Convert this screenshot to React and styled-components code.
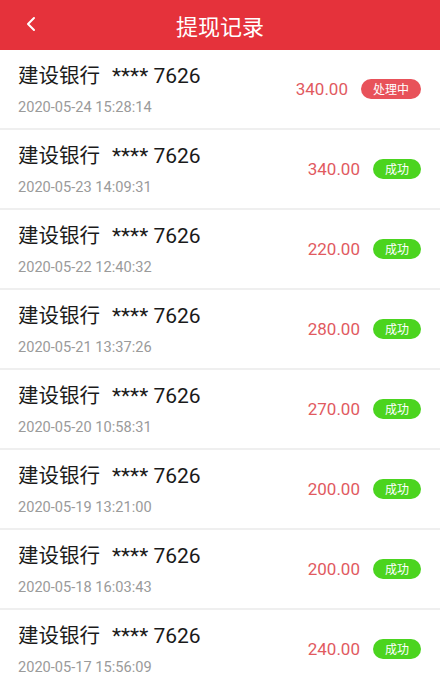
import React from "react"
import styled, { createGlobalStyle } from "styled-components"

const records = [
  { date: "2020-05-24 15:28:14", amount: "340.00", status: "pending" },
  { date: "2020-05-23 14:09:31", amount: "340.00", status: "done" },
  { date: "2020-05-22 12:40:32", amount: "220.00", status: "done" },
  { date: "2020-05-21 13:37:26", amount: "280.00", status: "done" },
  { date: "2020-05-20 10:58:31", amount: "270.00", status: "done" },
  { date: "2020-05-19 13:21:00", amount: "200.00", status: "done" },
  { date: "2020-05-18 16:03:43", amount: "200.00", status: "done" },
  { date: "2020-05-17 15:56:09", amount: "240.00", status: "done" },
]

const GlobalStyle = createGlobalStyle`
  body {
    margin: 0;
    background: #fff;
    font-family: Roboto, "Noto Sans CJK SC", sans-serif;
  }
`

const App = () => {
  return (
    <>
      <GlobalStyle />
      <Page>
        <Header>
          <BackButton type="button">
            <svg width="14" height="18" viewBox="0 0 14 18">
              <path
                d="M10 3 L4 9 L10 15"
                fill="none"
                stroke="#fff"
                strokeWidth="2"
                strokeLinecap="round"
                strokeLinejoin="round"
              />
            </svg>
          </BackButton>
          <Title>提现记录</Title>
        </Header>
        <List>
          {records.map((r, i) => (
            <Row key={i}>
              <Info>
                <Bank>
                  建设银行<Card>**** 7626</Card>
                </Bank>
                <Time>{r.date}</Time>
              </Info>
              <Amount>{r.amount}</Amount>
              <Badge $pending={r.status === "pending"}>
                {r.status === "pending" ? "处理中" : "成功"}
              </Badge>
            </Row>
          ))}
        </List>
      </Page>
    </>
  )
}

const Page = styled.div`
  width: 440px;
  height: 676px;
  overflow: hidden;
`

const Header = styled.header`
  position: relative;
  height: 50px;
  background: #e5323b;
  display: flex;
  align-items: center;
  justify-content: center;
`

const BackButton = styled.button`
  position: absolute;
  left: 19px;
  top: 12px;
  width: 24px;
  height: 24px;
  padding: 0;
  border: none;
  background: transparent;
  display: flex;
  align-items: center;
  justify-content: center;
`

const Title = styled.h1`
  margin: 0;
  color: #fff;
  font-size: 22px;
  font-weight: normal;
  font-family: "Noto Sans CJK SC", sans-serif;
`

const List = styled.ul`
  list-style: none;
  margin: 0;
  padding: 0;
`

const Row = styled.li`
  height: 78px;
  box-sizing: content-box;
  border-bottom: 2px solid #efefef;
  display: flex;
  align-items: center;
  padding: 0 19px 0 18px;
`

const Info = styled.div`
  flex: 1;
  display: flex;
  flex-direction: column;
  gap: 7px;
`

const Bank = styled.div`
  font-size: 20.5px;
  line-height: 27px;
  color: #1a1a1a;
  font-family: "Noto Sans CJK SC", sans-serif;
`

const Card = styled.span`
  margin-left: 12px;
  font-family: Roboto, sans-serif;
  font-size: 21px;
`

const Time = styled.div`
  font-size: 14.6px;
  line-height: 20px;
  color: #9a9a9a;
`

const Amount = styled.div`
  font-size: 17px;
  color: #e15a5f;
  margin-right: 13px;
`

const Badge = styled.span`
  height: 20px;
  line-height: 20px;
  border-radius: 10px;
  padding: 0 12px;
  font-size: 12px;
  color: #fff;
  font-family: "Noto Sans CJK SC", sans-serif;
  background: ${props => (props.$pending ? "#e8525a" : "#4bd41f")};
`

export default App
